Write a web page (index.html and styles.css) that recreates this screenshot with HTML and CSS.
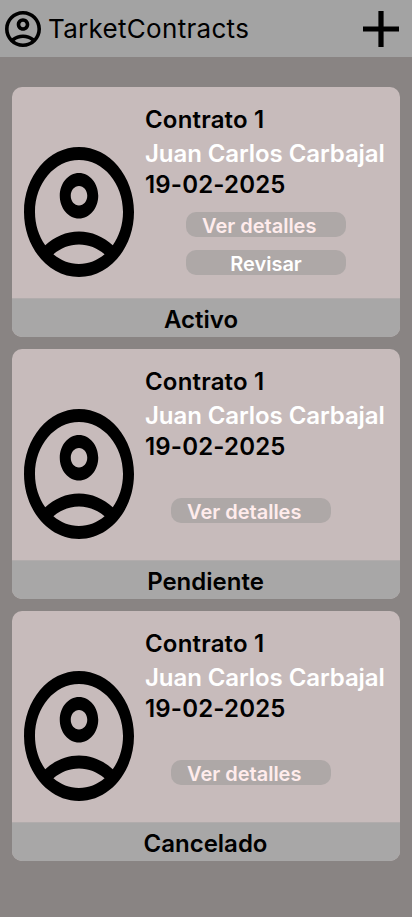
FILE: index.html
```html
<!DOCTYPE html>
<html lang="es">
<head>
<meta charset="utf-8">
<meta name="viewport" content="width=device-width, initial-scale=1">
<title>TarketContracts</title>
<link rel="stylesheet" href="styles.css">
</head>
<body>
<svg class="sprite" width="0" height="0" aria-hidden="true">
  <symbol id="account" viewBox="2 2 20 20" preserveAspectRatio="none">
    <path d="M12 2C6.48 2 2 6.48 2 12s4.48 10 10 10 10-4.48 10-10S17.52 2 12 2zM7.35 18.5C8.66 17.56 10.26 17 12 17s3.34.56 4.65 1.5C15.34 19.44 13.74 20 12 20s-3.34-.56-4.65-1.5zm10.79-1.38C16.45 15.8 14.32 15 12 15s-4.45.8-6.14 2.12C4.7 15.73 4 13.95 4 12c0-4.42 3.58-8 8-8s8 3.58 8 8c0 1.95-.7 3.73-1.86 5.12zM12 6c-1.93 0-3.5 1.57-3.5 3.5S10.07 13 12 13s3.5-1.57 3.5-3.5S13.93 6 12 6zm0 5c-.83 0-1.5-.67-1.5-1.5S11.17 8 12 8s1.5.67 1.5 1.5S12.83 11 12 11z"/>
  </symbol>
</svg>
<header class="topbar">
  <svg class="topbar-icon"><use href="#account"/></svg>
  <h1 class="title">TarketContracts</h1>
  <svg class="add" viewBox="0 0 36 36"><path d="M15.4 0h5.2v15.4H36v5.2H20.6V36h-5.2V20.6H0v-5.2h15.4z"/></svg>
</header>
<main class="list">
  <article class="card">
    <div class="card-body">
      <svg class="avatar"><use href="#account"/></svg>
      <div class="info">
        <p class="line">Contrato 1</p>
        <p class="line name">Juan Carlos Carbajal</p>
        <p class="line">19-02-2025</p>
        <div class="actions double">
          <button class="btn details">Ver detalles</button>
          <button class="btn">Revisar</button>
        </div>
      </div>
    </div>
    <footer class="status active">Activo</footer>
  </article>
  <article class="card">
    <div class="card-body">
      <svg class="avatar"><use href="#account"/></svg>
      <div class="info">
        <p class="line">Contrato 1</p>
        <p class="line name">Juan Carlos Carbajal</p>
        <p class="line">19-02-2025</p>
        <div class="actions single">
          <button class="btn details">Ver detalles</button>
        </div>
      </div>
    </div>
    <footer class="status">Pendiente</footer>
  </article>
  <article class="card">
    <div class="card-body">
      <svg class="avatar"><use href="#account"/></svg>
      <div class="info">
        <p class="line">Contrato 1</p>
        <p class="line name">Juan Carlos Carbajal</p>
        <p class="line">19-02-2025</p>
        <div class="actions single">
          <button class="btn details">Ver detalles</button>
        </div>
      </div>
    </div>
    <footer class="status">Cancelado</footer>
  </article>
</main>
</body>
</html>
```
FILE: styles.css
```css
* { box-sizing: border-box; margin: 0; padding: 0; }

body {
  min-height: 917px;
  background: #898483;
  color: #000;
  font-family: Inter, "Liberation Sans", sans-serif;
}

.sprite { display: none; }

.topbar {
  display: flex;
  align-items: center;
  height: 57px;
  padding: 0 13px 0 5px;
  background: #a3a3a3;
}

.topbar-icon { width: 36px; height: 36px; margin-top: 1px; }

.title {
  margin-left: 7px;
  font-size: 26px;
  font-weight: 400;
  line-height: 30px;
  letter-spacing: 0.3px;
  white-space: nowrap;
}

.add { width: 36px; height: 36px; margin-left: auto; margin-top: 1px; }

.list {
  display: flex;
  flex-direction: column;
  gap: 12px;
  padding: 30px 12px 0;
}

.card {
  height: 250px;
  overflow: hidden;
  border-radius: 10px;
  background: #c7bbbb;
}

.card-body { display: flex; height: 211px; padding-left: 12px; }

.avatar { flex: none; width: 110px; height: 130px; margin-top: 60px; }

.info { flex: 1; margin-left: 11px; padding-top: 17px; }

.line {
  font-size: 24px;
  font-weight: 600;
  line-height: 31px;
  letter-spacing: 0.18px;
  white-space: nowrap;
}

.name { margin-top: 3px; color: #fff; letter-spacing: -0.08px; }

.actions { display: flex; flex-direction: column; gap: 13px; }
.double { margin: 12px 0 0 41px; }
.single { margin: 36px 0 0 26px; }

.btn {
  width: 160px;
  height: 25px;
  border: 0;
  border-radius: 10px;
  background: #aea8a7;
  color: #fff;
  font: 600 20px/25px Inter, "Liberation Sans", sans-serif;
  padding-top: 2px;
}

.details { padding-left: 16px; color: #ffecec; text-align: left; }

.status {
  height: 39px;
  padding-right: 1px;
  border-top: 1px solid #b1acac;
  background: #a8a7a7;
  font-size: 24px;
  font-weight: 600;
  line-height: 41px;
  text-align: center;
}

.active { padding-right: 10px; }
```
